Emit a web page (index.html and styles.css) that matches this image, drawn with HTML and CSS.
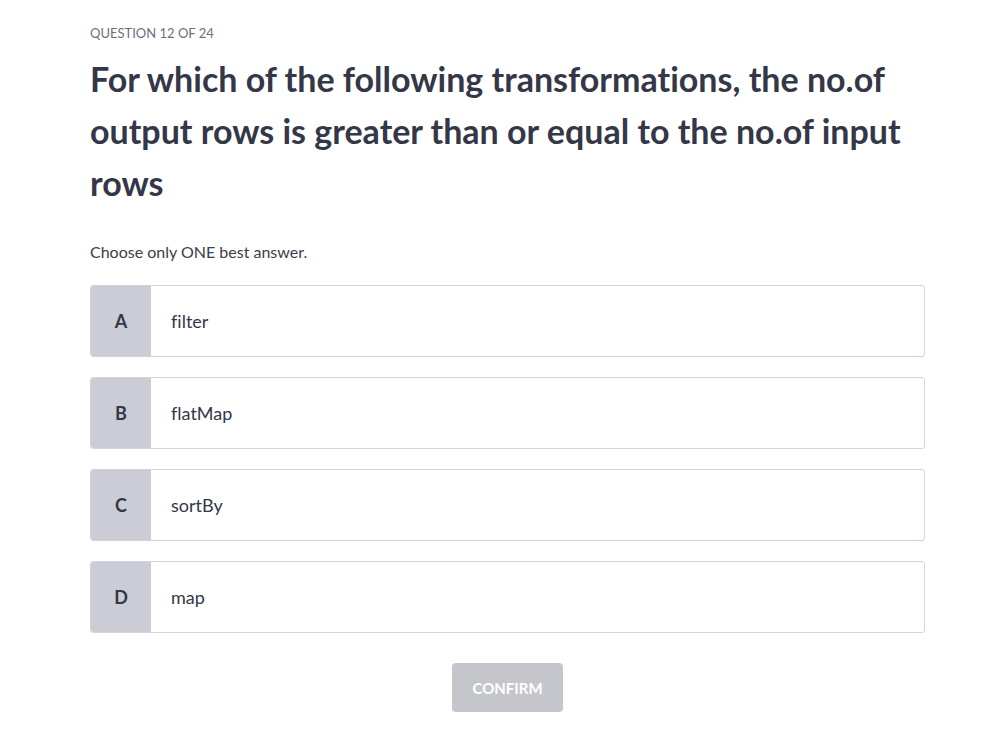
FILE: index.html
```html
<!DOCTYPE html>
<html>
<head>
<meta charset="utf-8">
<link rel="stylesheet" href="styles.css">
</head>
<body>
<main class="quiz">
  <div class="counter">QUESTION 12 OF 24</div>
  <h1 class="question">For which of the following transformations, the no.of output rows is greater than or equal to the no.of input rows</h1>
  <p class="hint">Choose only ONE best answer.</p>
  <div class="options">
    <div class="option"><div class="letter">A</div><div class="text">filter</div></div>
    <div class="option"><div class="letter">B</div><div class="text">flatMap</div></div>
    <div class="option"><div class="letter">C</div><div class="text">sortBy</div></div>
    <div class="option"><div class="letter">D</div><div class="text">map</div></div>
  </div>
  <div class="actions"><button class="confirm">CONFIRM</button></div>
</main>
</body>
</html>
```
FILE: styles.css
```css
html, body { margin: 0; padding: 0; background: #fff; }
body { font-family: "Lato", "Noto Sans", sans-serif; color: #333748; font-variant-ligatures: none; }
.quiz { padding: 24px 62px 0 90px; }
.counter { font-size: 13px; color: #6b7080; line-height: 18px; }
.question { font-size: 34px; font-weight: 700; line-height: 52px; margin: 11px 0 0 0; color: #333748; }
.hint { font-size: 16px; margin: 32px 0 0 0; line-height: 22px; color: #3a3d4a; }
.options { display: flex; flex-direction: column; gap: 20px; margin-top: 22px; }
.option { display: flex; height: 72px; box-sizing: border-box; border: 1px solid #d3d3de; border-radius: 3px; overflow: hidden; }
.letter { width: 60px; background: #cbccd6; display: flex; align-items: center; justify-content: center; font-size: 18px; font-weight: 700; color: #333748; }
.text { display: flex; align-items: center; padding-left: 20px; font-size: 18px; color: #333748; }
.actions { display: flex; justify-content: center; margin-top: 30px; }
.confirm { width: 111px; height: 49px; background: #c5c6cc; color: #fff; border: none; border-radius: 4px; font-family: inherit; font-size: 15px; font-weight: 700; font-variant-ligatures: none; }
```
